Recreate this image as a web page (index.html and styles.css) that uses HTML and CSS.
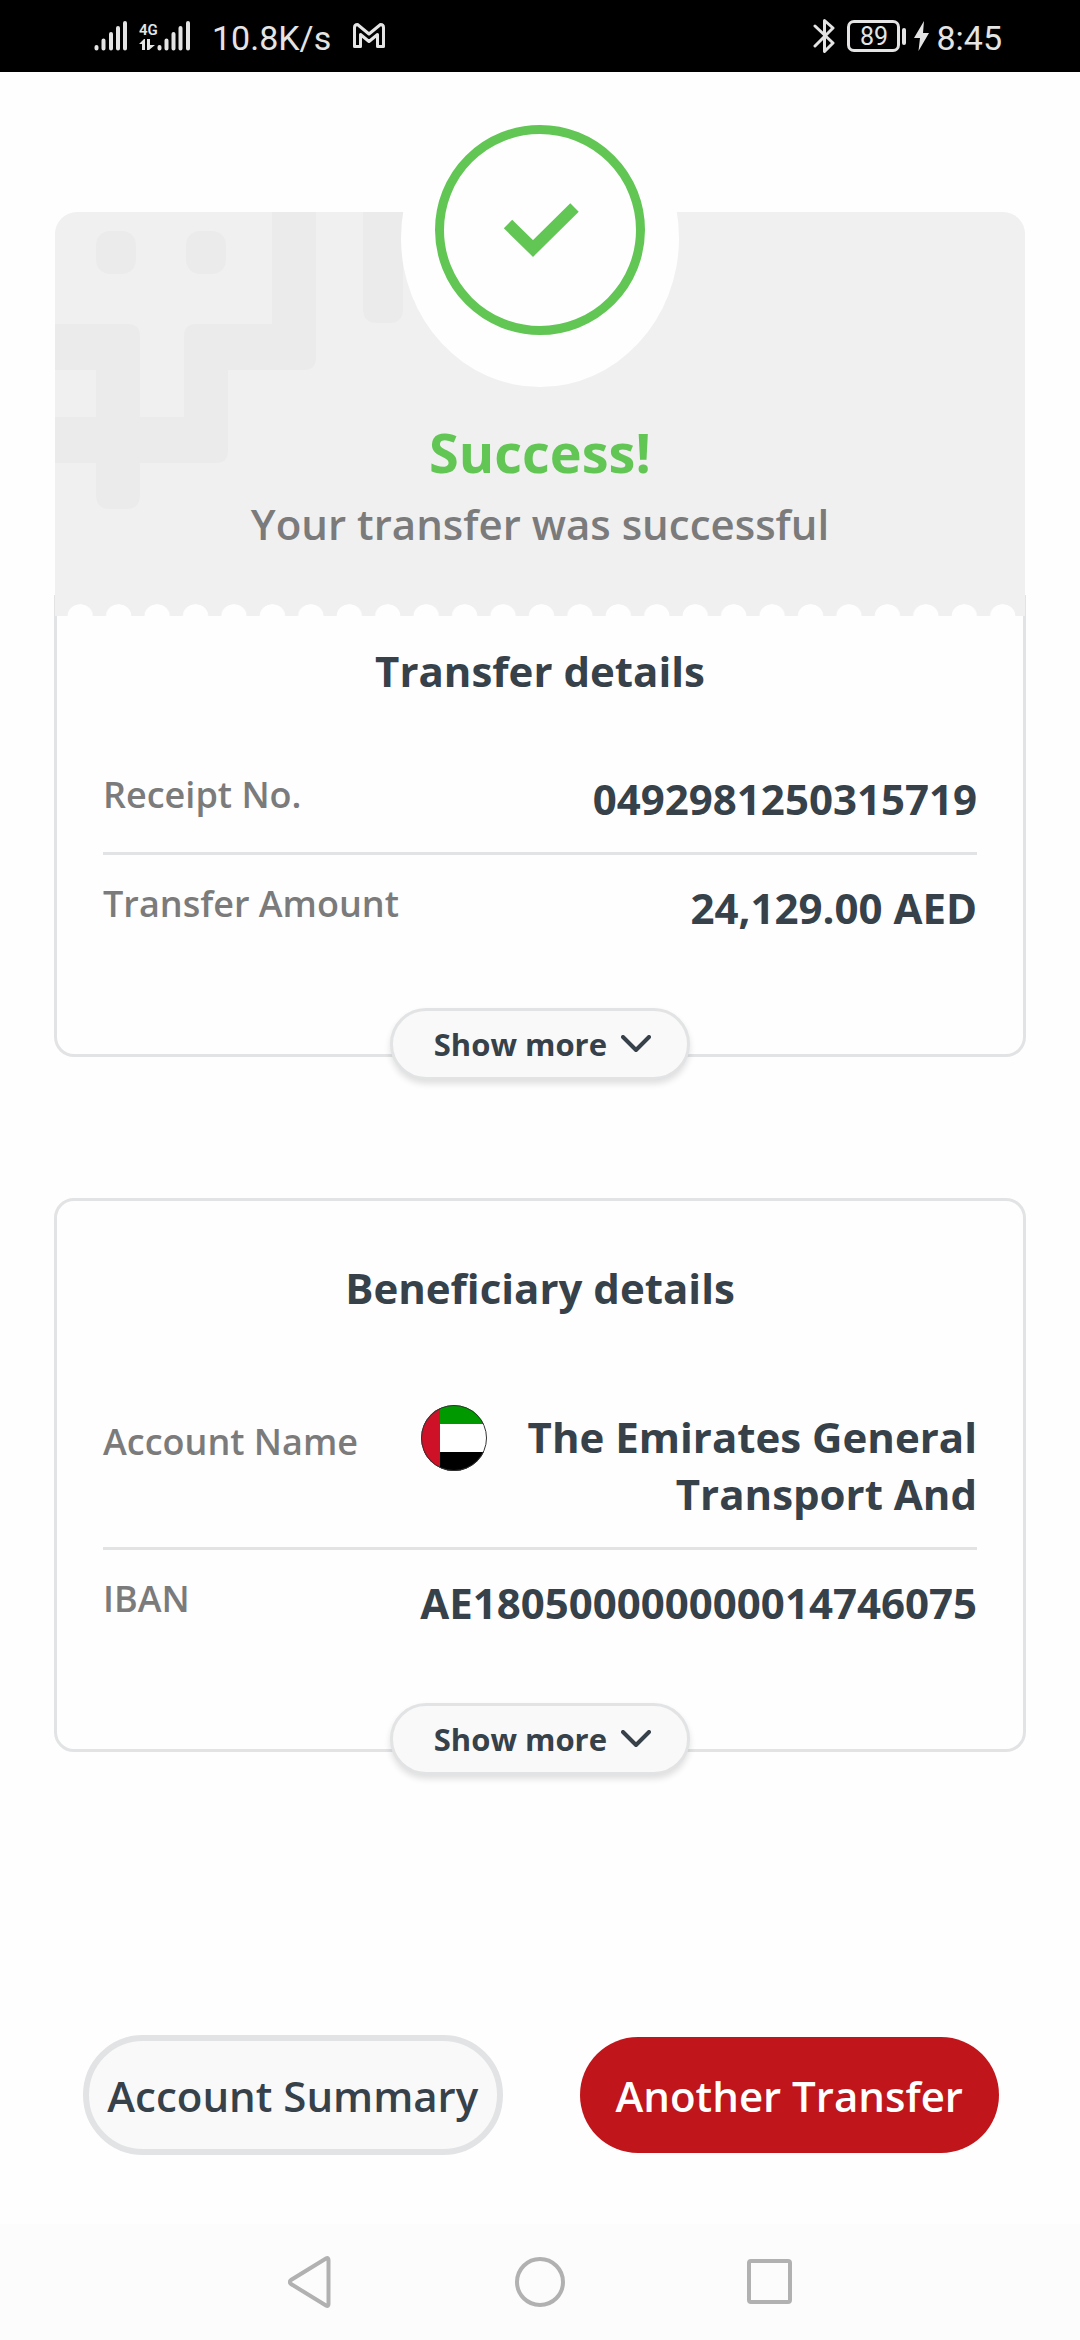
FILE: index.html
```html
<!DOCTYPE html>
<html lang="en">
<head>
    <meta charset="UTF-8">
    <meta name="viewport" content="width=device-width, initial-scale=1.0">
    <title>Transfer Successful</title>
    <link rel="stylesheet" href="styles.css">
</head>
<body>
    <header class="status-bar">
        <div class="status-group">
            <svg class="signal" width="33" height="32" viewBox="0 0 33 32" aria-hidden="true">
                <path d="M2.5 27v1.500M9.500 20.500v8M17 14v14.500M24 8v20.500M31 3v25.500"/>
            </svg>
            <div class="network">
                <span class="network-type">4G</span>
                <svg width="16" height="12" viewBox="0 0 16 12" aria-hidden="true">
                    <path d="M0 5l5-5h1v11H3V5zM8 0h3v6h5l-6 5H8z"/>
                </svg>
            </div>
            <svg class="signal" width="33" height="32" viewBox="0 0 33 32" aria-hidden="true">
                <path d="M2.500 27v1.500M9.500 20.500v8M16.500 14v14.500M23.500 8v20.500M31 3v25.500"/>
            </svg>
            <span class="speed">10.8K/s</span>
            <svg class="mail" width="32" height="26" viewBox="0 0 32 26" aria-hidden="true">
                <path d="M1.500 4.500Q1.500 1.500 4.500 1.500L16 11 27.500 1.500Q30.500 1.500 30.500 4.500V23.500H24.500V11.500L16 18.500 7.500 11.500V23.500H1.500Z"/>
            </svg>
        </div>
        <div class="status-group">
            <svg class="bluetooth" width="22" height="36" viewBox="0 0 22 36" aria-hidden="true">
                <path d="M2 8l18 17-8.500 8.500V2.500L20 10 2 28"/>
            </svg>
            <span class="battery">89</span>
            <span class="battery-tip"></span>
            <svg class="bolt" width="15" height="30" viewBox="0 0 15 30" aria-hidden="true">
                <path d="M10 0L0 17h6L4.500 30 15 12H9z"/>
            </svg>
            <span class="clock">8:45</span>
        </div>
    </header>

    <main class="receipt">
        <section class="hero">
            <svg class="hero-pattern" width="350" height="300" viewBox="0 0 350 300" aria-hidden="true">
                <rect x="41" y="19" width="40" height="43" rx="14"/>
                <rect x="131" y="19" width="40" height="43" rx="14"/>
                <path d="M308 0h40v97q0 14-14 14h-12q-14 0-14-14z"/>
                <path d="M217 0h44v146q0 12-12 12h-76v81q0 12-12 12H85v32q0 14-14 14H55q-14 0-14-14v-32H0v-46h41v-47H0v-46h73q12 0 12 12v81h44v-81q0-12 12-12h76z"/>
            </svg>
            <div class="badge">
                <svg width="210" height="210" viewBox="0 0 210 210" aria-hidden="true">
                    <circle cx="105" cy="105" r="100.500"/>
                    <path d="M73 99l25 24.500L139.500 82.500"/>
                </svg>
            </div>
            <h1>Success!</h1>
            <p>Your transfer was successful</p>
            <div class="scallops"></div>
        </section>

        <section class="card card-transfer">
            <h2>Transfer details</h2>
            <dl>
                <div class="row">
                    <dt>Receipt No.</dt>
                    <dd>0492981250315719</dd>
                </div>
                <div class="row">
                    <dt>Transfer Amount</dt>
                    <dd>24,129.00 AED</dd>
                </div>
            </dl>
            <button type="button" class="show-more">
                Show more
                <svg width="30" height="18" viewBox="0 0 30 18" aria-hidden="true"><path d="M2 2l13 13L28 2"/></svg>
            </button>
        </section>

        <section class="card card-beneficiary">
            <h2>Beneficiary details</h2>
            <dl>
                <div class="row row-account">
                    <dt>Account Name</dt>
                    <dd>
                        <svg class="flag" width="66" height="66" viewBox="0 0 66 66" role="img" aria-label="United Arab Emirates">
                            <clipPath id="flagClip"><circle cx="33" cy="33" r="33"/></clipPath>
                            <g clip-path="url(#flagClip)">
                                <rect width="66" height="66" fill="#fff"/>
                                <rect width="66" height="19" fill="#009a00"/>
                                <rect y="47" width="66" height="19" fill="#000"/>
                                <rect width="19" height="66" fill="#ce1126"/>
                            </g>
                            <circle cx="33" cy="33" r="32.500" fill="none" stroke="#333"/>
                        </svg>
                        <span>The Emirates General Transport And</span>
                    </dd>
                </div>
                <div class="row">
                    <dt>IBAN</dt>
                    <dd>AE180500000000014746075</dd>
                </div>
            </dl>
            <button type="button" class="show-more">
                Show more
                <svg width="30" height="18" viewBox="0 0 30 18" aria-hidden="true"><path d="M2 2l13 13L28 2"/></svg>
            </button>
        </section>

        <div class="actions">
            <button type="button" class="btn btn-light">Account Summary</button>
            <button type="button" class="btn btn-red">Another Transfer</button>
        </div>
    </main>

    <nav class="nav-bar">
        <button type="button" aria-label="Back">
            <svg width="60" height="60" viewBox="0 0 60 60"><path d="M38 6.500Q40.500 5 40.500 8V52Q40.500 55 38 53.500L3 32Q.5 30 3 28Z"/></svg>
        </button>
        <button type="button" aria-label="Home">
            <svg width="60" height="60" viewBox="0 0 60 60"><circle cx="30" cy="30" r="23"/></svg>
        </button>
        <button type="button" aria-label="Recent apps">
            <svg width="60" height="60" viewBox="0 0 60 60"><rect x="17" y="9" width="41" height="41" rx="2"/></svg>
        </button>
    </nav>
</body>
</html>
```
FILE: styles.css
```css
* { margin: 0; padding: 0; box-sizing: border-box; }
body {
    font-family: 'Open Sans', 'Noto Sans', sans-serif;
    background: #fefefe;
    color: #36414a;
    min-height: 100vh;
    display: flex;
    flex-direction: column;
}
button { font-family: inherit; color: inherit; cursor: pointer; }
svg { display: block; flex-shrink: 0; }

/* Status bar */
.status-bar {
    height: 72px;
    background: #000;
    color: #e4e4e4;
    display: flex;
    justify-content: space-between;
    align-items: center;
    padding: 0 78px 0 94px;
    font-family: Roboto, sans-serif;
}
.status-group { display: flex; align-items: center; }
.signal path { fill: none; stroke: #e4e4e4; stroke-width: 4; stroke-linecap: round; }
.network { width: 16px; margin: 0 2px 0 12px; }
.network-type { display: block; font-size: 15px; line-height: 18px; font-weight: 600; }
.network svg { fill: #e4e4e4; }
.speed { font-size: 34px; line-height: 40px; padding-top: 4px; margin-left: 22px; }
.mail { margin-left: 22px; }
.mail path { fill: none; stroke: #e4e4e4; stroke-width: 3; stroke-linejoin: round; }
.bluetooth path { fill: none; stroke: #e4e4e4; stroke-width: 3; stroke-linejoin: round; stroke-linecap: round; }
.battery {
    width: 53px;
    height: 32px;
    border: 3px solid #e4e4e4;
    border-radius: 7px;
    margin-left: 12px;
    font-size: 25px;
    line-height: 27px;
    text-align: center;
}
.battery-tip { width: 4px; height: 17px; border-radius: 2px; background: #e4e4e4; margin: 0 8px 0 2px; }
.bolt { fill: #e4e4e4; }
.clock { font-size: 34px; line-height: 40px; padding-top: 4px; margin-left: 7px; }

/* Success header */
.receipt { flex: 1; padding: 140px 54px 69px; }
.hero {
    position: relative;
    z-index: 1;
    margin: 0 1px;
    padding-top: 203px;
    background: #f0f0f0;
    border-radius: 22px 22px 0 0;
    text-align: center;
}
.hero-pattern { position: absolute; top: 0; left: 0; fill: #ebebeb; }
.badge {
    position: absolute;
    top: -123px;
    left: 50%;
    transform: translateX(-50%);
    width: 278px;
    height: 298px;
    border-radius: 50%;
    background: #fefefe;
    display: flex;
    justify-content: center;
    padding-top: 36px;
}
.badge circle { fill: none; stroke: #62c655; stroke-width: 9; }
.badge path { fill: none; stroke: #62c655; stroke-width: 12; }
h1 { font-size: 54px; line-height: 74px; font-weight: 700; color: #62c655; }
.hero p { font-size: 42px; line-height: 57px; font-weight: 600; color: #7b7b7b; margin-top: 6px; }
.scallops {
    height: 12px;
    margin: 52px 3px 0 6px;
    background: radial-gradient(13px 12px at 50% 100%, #fefefe 95%, transparent 100%) 0 0 / 38px 12px round;
}

/* Cards */
.card {
    position: relative;
    border: 3px solid #e2e3e4;
    border-radius: 20px;
    padding: 58px 46px 118px;
}
.card-transfer { margin-top: -21px; border-top: none; border-radius: 0 0 20px 20px; padding-top: 47px; }
.card-beneficiary { margin-top: 141px; }
h2 { font-size: 42px; line-height: 57px; font-weight: 700; text-align: center; }
.card-transfer dl { padding-top: 47px; }
.card-beneficiary dl { padding-top: 68px; }
.row { display: flex; justify-content: space-between; padding-top: 24px; }
.row + .row { border-top: 3px solid #e2e3e4; margin-top: 25px; }
dt { font-size: 36px; line-height: 50px; font-weight: 600; color: #7b7b7b; }
dd { font-size: 42px; line-height: 57px; font-weight: 700; text-align: right; }
.row-account dt { padding-top: 9px; }
.row-account dd { display: flex; gap: 38px; }
.row-account span { max-width: 452px; }
.flag { margin-top: -3px; }
.show-more {
    position: absolute;
    left: 50%;
    bottom: -26px;
    transform: translateX(-50%);
    width: 300px;
    height: 72px;
    display: flex;
    align-items: center;
    justify-content: flex-end;
    gap: 14px;
    padding-right: 36px;
    background: #f9f9f9;
    border: 3px solid #e2e3e4;
    border-radius: 36px;
    box-shadow: 0 4px 6px rgba(0, 0, 0, 0.12);
    font-size: 31px;
    font-weight: 700;
    white-space: nowrap;
}
.show-more path { fill: none; stroke: #36414a; stroke-width: 4; stroke-linecap: round; stroke-linejoin: round; }

/* Bottom buttons */
.actions {
    display: grid;
    grid-template-columns: 1fr 1fr;
    align-items: center;
    gap: 77px;
    padding: 0 27px 0 29px;
    margin-top: 283px;
}
.btn { height: 116px; border: none; border-radius: 60px; font-size: 42px; font-weight: 600; white-space: nowrap; }
.btn-light { height: 120px; background: #f9f9f9; border: 6px solid #e2e3e4; }
.btn-red { background: #c0151a; color: #fff; }

/* Navigation bar */
.nav-bar {
    height: 116px;
    background: #fcfcfc;
    display: flex;
    justify-content: center;
    gap: 162px;
    padding-top: 28px;
}
.nav-bar button { width: 60px; height: 60px; background: none; border: none; }
.nav-bar path, .nav-bar circle, .nav-bar rect { fill: none; stroke: #b1b1b1; stroke-width: 4; }
```
